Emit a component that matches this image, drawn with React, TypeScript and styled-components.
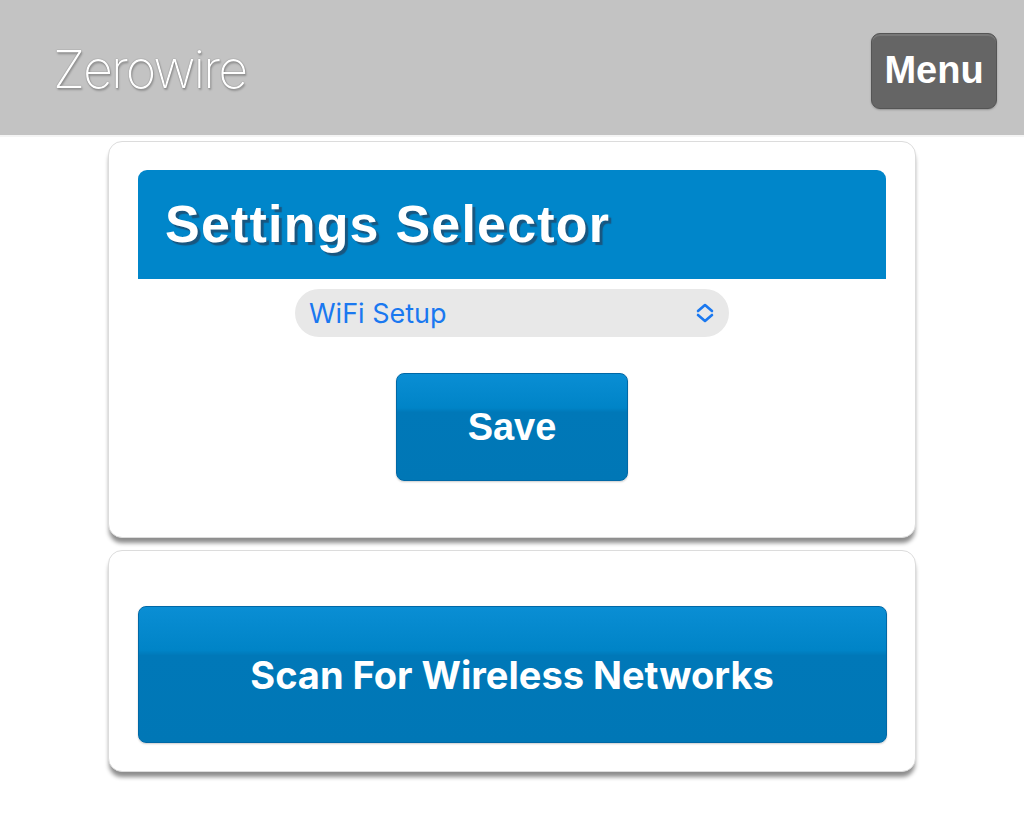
import { useState } from "react";
import styled, { createGlobalStyle } from "styled-components";

const GlobalStyle = createGlobalStyle`
    html, body {
        margin: 0;
        padding: 0;
        background: #ffffff;
        font-family: "Liberation Sans", Arial, sans-serif;
    }
`;

const Page = styled.div`
    display: flex;
    flex-direction: column;
    min-height: 826px;
`;

const TopBar = styled.header`
    height: 137px;
    background-color: #c3c3c3;
    border-bottom: 2px solid #f4f4f4;
    display: flex;
    align-items: center;
    justify-content: space-between;
    padding: 0 27px 0 53px;
    box-sizing: border-box;
`;

const Brand = styled.div`
    font-family: "Inter", "Lato", sans-serif;
    font-weight: 200;
    font-size: 52px;
    letter-spacing: -2px;
    color: #ffffff;
    text-shadow: 0 0 1px rgba(0, 0, 0, 0.6), 1px 2px 2px rgba(0, 0, 0, 0.25);
    margin-top: 4px;
`;

const MenuButton = styled.button`
    width: 126px;
    height: 76px;
    background: #656565;
    border: 1px solid #555555;
    border-radius: 9px;
    box-shadow: inset 0 2px 0 rgba(255, 255, 255, 0.12), 0 1px 2px rgba(0, 0, 0, 0.25);
    color: #ffffff;
    font-family: "Liberation Sans", Arial, sans-serif;
    font-weight: bold;
    font-size: 38px;
    padding: 0;
    margin-top: 6px;
    cursor: pointer;
`;

const Main = styled.main`
    display: flex;
    flex-direction: column;
    align-items: center;
    gap: 12px;
    padding-top: 4px;
`;

const Card = styled.section<{ $padTop: number; $padBottom: number }>`
    width: 808px;
    box-sizing: border-box;
    background: #ffffff;
    border: 1px solid #dcdcdc;
    border-radius: 14px;
    box-shadow: 0 6px 4px -1px rgba(0, 0, 0, 0.45);
    padding: ${(p) => p.$padTop}px 29px ${(p) => p.$padBottom}px;
    display: flex;
    flex-direction: column;
    align-items: center;
`;

const TitleBar = styled.div`
    align-self: stretch;
    height: 109px;
    background: #0086ca;
    border-radius: 9px 9px 0 0;
    display: flex;
    align-items: center;
    padding-left: 27px;
`;

const Title = styled.h1`
    margin: 0;
    font-family: "Liberation Sans", Arial, sans-serif;
    font-weight: bold;
    font-size: 52px;
    letter-spacing: 1.2px;
    color: #ffffff;
    text-shadow: 3px 3px 1px #19567f;
    margin-top: -2px;
`;

const SelectWrap = styled.label`
    position: relative;
    width: 434px;
    height: 48px;
    margin-top: 10px;
    display: block;
`;

const Select = styled.select`
    width: 100%;
    height: 100%;
    appearance: none;
    border: none;
    outline: none;
    border-radius: 24px;
    background: #e8e8e8;
    color: #1a78f0;
    font-family: "Inter", "Liberation Sans", sans-serif;
    font-size: 27px;
    padding: 0 50px 0 14px;
`;

const Chevron = styled.svg`
    position: absolute;
    right: 13px;
    top: 13px;
    width: 22px;
    height: 22px;
    pointer-events: none;
`;

const Spacer = styled.div`
    height: 36px;
`;

const BlueButton = styled.button<{ $w: number; $h: number; $font: string }>`
    width: ${(p) => p.$w}px;
    height: ${(p) => p.$h}px;
    border: 1px solid #0068a6;
    border-radius: 8px;
    background: linear-gradient(#0a8ed4 0%, #0084c7 32%, #0078b8 36%, #0077b6 100%);
    box-shadow: 0 1px 2px rgba(0, 0, 0, 0.2);
    color: #ffffff;
    font-family: ${(p) => p.$font};
    font-weight: bold;
    font-size: 38px;
    cursor: pointer;
`;

export default function App() {
    const [setting, setSetting] = useState("wifi");

    return (
        <Page>
            <GlobalStyle />
            <TopBar>
                <Brand>Zerowire</Brand>
                <MenuButton>Menu</MenuButton>
            </TopBar>
            <Main>
                <Card $padTop={28} $padBottom={56}>
                    <TitleBar>
                        <Title>Settings Selector</Title>
                    </TitleBar>
                    <SelectWrap>
                        <Select value={setting} onChange={(e) => setSetting(e.target.value)}>
                            <option value="wifi">WiFi Setup</option>
                            <option value="network">Network Setup</option>
                        </Select>
                        <Chevron viewBox="0 0 22 22">
                            <path d="M4 9 L11 3 L18 9 M4 13 L11 19 L18 13" fill="none" stroke="#1a78f0" strokeWidth="2.6" strokeLinecap="round" strokeLinejoin="round" />
                        </Chevron>
                    </SelectWrap>
                    <Spacer />
                    <BlueButton $w={232} $h={108} $font={`"Liberation Sans", Arial, sans-serif`}>Save</BlueButton>
                </Card>
                <Card $padTop={55} $padBottom={28}>
                    <BlueButton $w={749} $h={137} $font={`"Inter", "Liberation Sans", sans-serif`}>
                        Scan For Wireless Networks
                    </BlueButton>
                </Card>
            </Main>
        </Page>
    );
}
